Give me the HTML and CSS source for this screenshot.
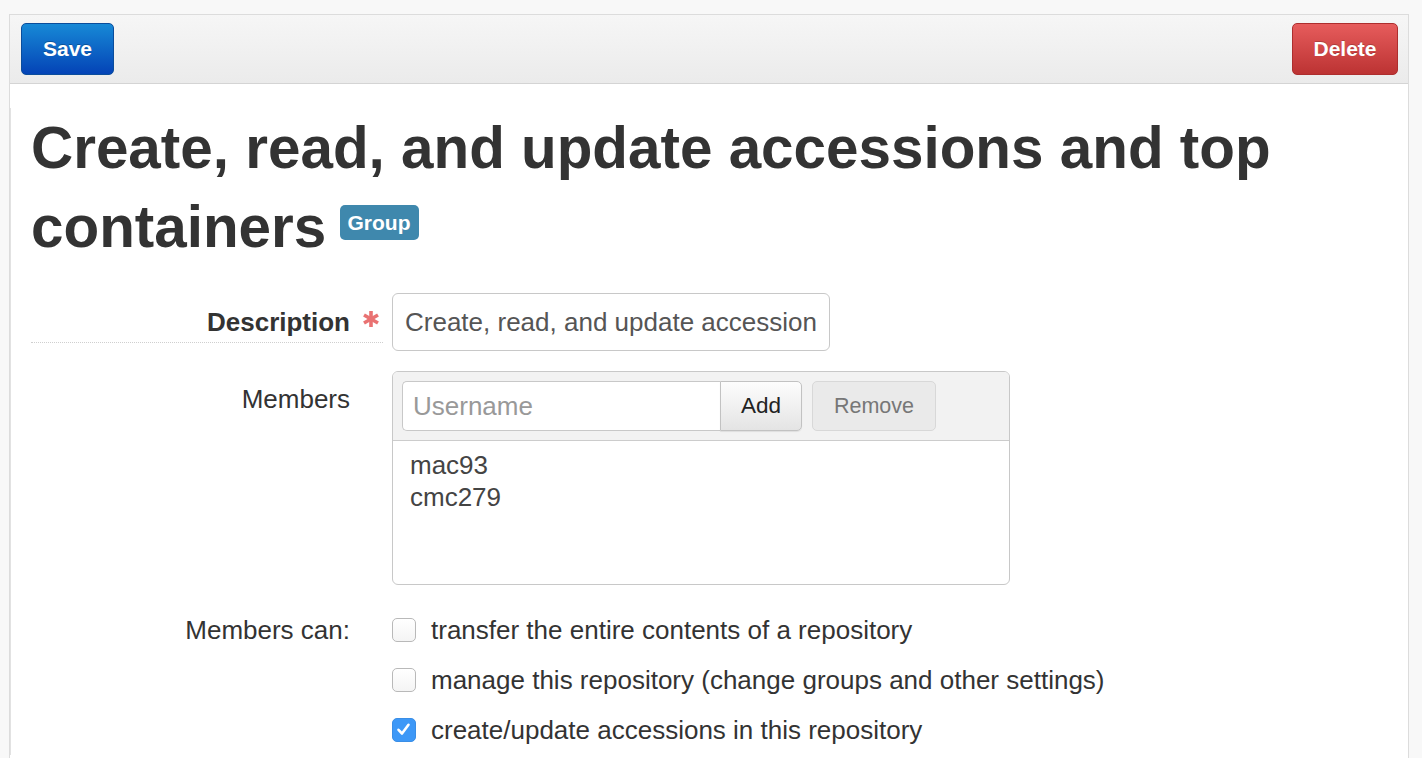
FILE: index.html
```html
<!DOCTYPE html>
<html>
<head>
<meta charset="utf-8">
<title>Group</title>
<link rel="stylesheet" href="styles.css">
</head>
<body>
<div class="panel">
  <div class="toolbar">
    <button class="btn btn-save">Save</button>
    <button class="btn btn-delete">Delete</button>
  </div>
  <div class="content">
    <h1 class="title"><span class="title-text">Create, read, and update accessions and top containers</span> <span class="badge">Group</span></h1>
    <div class="form">
      <div class="row">
        <label class="label label-req">Description<svg class="req" width="20" height="18" viewBox="0 0 20 18"><g stroke="#e97272" stroke-width="3.6" stroke-linecap="butt"><line x1="10" y1="1" x2="10" y2="17"/><line x1="3" y1="5" x2="17" y2="13"/><line x1="3" y1="13" x2="17" y2="5"/></g></svg></label>
        <div class="control">
          <div class="text-input">Create, read, and update accession</div>
        </div>
      </div>
      <div class="row">
        <label class="label label-members">Members</label>
        <div class="control">
          <div class="members-box">
            <div class="members-head">
              <div class="user-input">Username</div>
              <button class="btn-add">Add</button>
              <button class="btn-remove">Remove</button>
            </div>
            <div class="members-list">
              <div class="member">mac93</div>
              <div class="member">cmc279</div>
            </div>
          </div>
        </div>
      </div>
      <div class="row">
        <label class="label label-can">Members can:</label>
        <div class="control">
          <div class="check-row"><span class="check"></span><span class="check-text">transfer the entire contents of a repository</span></div>
          <div class="check-row"><span class="check"></span><span class="check-text">manage this repository (change groups and other settings)</span></div>
          <div class="check-row"><span class="check checked"><svg width="23" height="23" viewBox="0 0 23 23"><path d="M6.5 11.8 L10 15.5 L16.5 6.8" fill="none" stroke="#fff" stroke-width="2.6" stroke-linecap="round" stroke-linejoin="round"/></svg></span><span class="check-text">create/update accessions in this repository</span></div>
        </div>
      </div>
    </div>
  </div>
</div>
</body>
</html>
```

FILE: styles.css
```css
html, body {
  margin: 0;
  padding: 0;
}
body {
  background: #f8f8f8;
  font-family: "Liberation Sans", Arial, Helvetica, sans-serif;
  color: #333;
  height: 758px;
  overflow: hidden;
}
.panel {
  margin: 14px 0 0 9px;
  width: 1398px;
  height: 760px;
  border: 1px solid #dcdcdc;
  background: #fff;
}
.toolbar {
  height: 68px;
  border-bottom: 1px solid #d4d4d4;
  background: linear-gradient(#f6f6f6, #ebebeb);
  display: flex;
  justify-content: space-between;
  align-items: center;
  padding: 0 10px 0 11px;
}
.btn {
  height: 52px;
  border-radius: 5px;
  font-family: "Liberation Sans", Arial, sans-serif;
  font-size: 21px;
  font-weight: bold;
  color: #fff;
  padding: 0;
  cursor: pointer;
}
.btn-save {
  width: 93px;
  background: linear-gradient(#1789d6, #0443b6);
  border: 1px solid #0a4d9c;
  text-shadow: 0 -1px 0 rgba(0,0,0,0.25);
}
.btn-delete {
  width: 106px;
  background: linear-gradient(#e65c5c, #bc3333);
  border: 1px solid #ad2e2e;
  text-shadow: 0 -1px 0 rgba(0,0,0,0.2);
}
.content {
  padding: 0 0 0 20px;
  border-left: 1px solid #e2e2e2;
}
.title {
  margin: 24px 0 27px 0;
  font-size: 58.4px;
  line-height: 79px;
  font-weight: bold;
  color: #333;
  width: 1300px;
}
.badge {
  display: inline-block;
  vertical-align: 17px;
  background: #3f88ad;
  color: #fff;
  font-size: 21px;
  line-height: 35px;
  height: 35px;
  padding: 0 8px;
  border-radius: 5px;
  margin-left: -3px;
}
.form {
  display: flex;
  flex-direction: column;
  gap: 20px;
}
.row {
  display: flex;
  gap: 9px;
}
.label {
  width: 319px;
  padding-right: 33px;
  text-align: right;
  font-size: 26px;
  line-height: 30px;
  position: relative;
  flex: none;
}
.label-req {
  font-weight: bold;
  padding-top: 14px;
  padding-bottom: 5px;
  border-bottom: 1px dotted #cfcfcf;
  align-self: flex-start;
}
.req {
  position: absolute;
  right: 2px;
  top: 17px;
}
.label-members {
  padding-top: 13px;
}
.label-can {
  padding-top: 10px;
}
.control {
  flex: none;
}
.text-input {
  width: 412px;
  height: 56px;
  border: 1px solid #c8c8c8;
  border-radius: 6px;
  padding: 0 12px;
  font-size: 26px;
  line-height: 56px;
  color: #555;
  white-space: nowrap;
  overflow: hidden;
}
.members-box {
  width: 616px;
  height: 212px;
  border: 1px solid #c8c8c8;
  border-radius: 6px;
  overflow: hidden;
}
.members-head {
  background: #f2f2f2;
  border-bottom: 1px solid #cccccc;
  padding: 9px;
  display: flex;
  align-items: center;
  height: 50px;
}
.user-input {
  width: 307px;
  height: 48px;
  border: 1px solid #c8c8c8;
  border-right: none;
  border-radius: 5px 0 0 5px;
  background: #fff;
  padding-left: 10px;
  font-size: 26px;
  line-height: 48px;
  color: #999;
}
.btn-add {
  width: 82px;
  height: 50px;
  border: 1px solid #c2c2c2;
  border-radius: 0 5px 5px 0;
  background: linear-gradient(#fdfdfd, #e4e4e4);
  box-shadow: 0 1px 1px rgba(0,0,0,0.08);
  font-family: "Liberation Sans", Arial, sans-serif;
  font-size: 22.5px;
  color: #222;
  padding: 0;
}
.btn-remove {
  margin-left: 10px;
  width: 124px;
  height: 50px;
  border: 1px solid #d8d8d8;
  border-radius: 5px;
  background: #eaeaea;
  font-family: "Liberation Sans", Arial, sans-serif;
  font-size: 21.5px;
  color: #777;
  padding: 0;
}
.members-list {
  padding: 8px 17px;
  font-size: 26px;
  line-height: 32px;
  color: #444;
}
.check-row {
  height: 50px;
  display: flex;
  align-items: center;
  gap: 15px;
  font-size: 26px;
  color: #333;
}
.check {
  width: 22px;
  height: 22px;
  border: 1px solid #b9b9b9;
  border-radius: 5px;
  background: linear-gradient(#fff, #f4f4f4);
  flex: none;
  position: relative;
}
.check.checked {
  background: #3d98f7;
  border-color: #3a8ee6;
}
.check.checked svg {
  position: absolute;
  left: -1px;
  top: -1px;
}
```
